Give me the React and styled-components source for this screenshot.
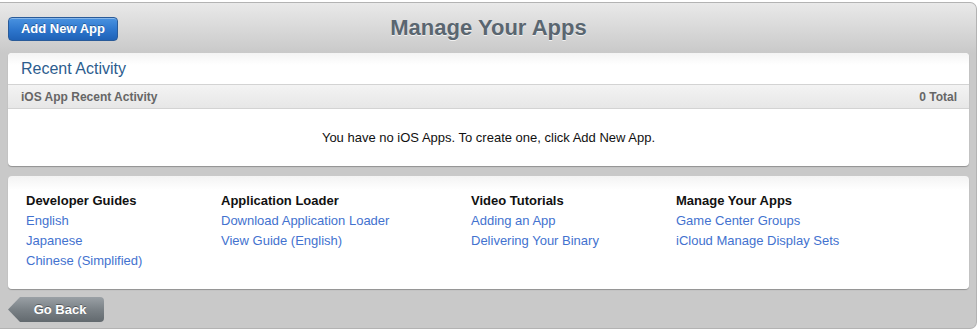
import React from 'react';
import styled, { createGlobalStyle } from 'styled-components';

const GlobalStyle = createGlobalStyle`
  body {
    margin: 0;
    background: #ffffff;
    font-family: 'Liberation Sans', Arial, sans-serif;
  }
`;

const Frame = styled.div`
  margin-top: 2px;
  width: 976px;
  height: 325px;
  border: 1px solid #b3b3b3;
  border-left: none;
  border-radius: 0 7px 7px 0;
  background: #c9c9c9;
  display: flex;
  flex-direction: column;
  overflow: hidden;
`;

const Header = styled.div`
  height: 50px;
  padding: 0 7px 0 8px;
  display: grid;
  grid-template-columns: 1fr auto 1fr;
  align-items: center;
  background: linear-gradient(#e9e9e9, #c9c9c9);
`;

const BlueButton = styled.button`
  justify-self: start;
  width: 110px;
  height: 24px;
  margin-top: 1px;
  border: 1px solid #2a5b99;
  border-radius: 4px;
  background: linear-gradient(#4a93e0, #2f78cf 50%, #1f62b7);
  color: #fff;
  font-family: inherit;
  font-weight: bold;
  font-size: 13px;
  text-shadow: 0 -1px 0 rgba(0, 0, 0, 0.3);
  box-shadow: inset 0 1px 0 rgba(255, 255, 255, 0.35);
  cursor: pointer;
`;

const PageTitle = styled.h1`
  margin: 0;
  font-size: 22px;
  font-weight: bold;
  color: #5a6670;
  text-shadow: 0 1px 0 rgba(255, 255, 255, 0.7);
`;

const Body = styled.div`
  padding: 0 7px 0 8px;
  display: flex;
  flex-direction: column;
  gap: 10px;
`;

const Panel = styled.div`
  background: #fff;
  border-radius: 4px;
  box-shadow: 0 1px 1px rgba(0, 0, 0, 0.28);
  overflow: hidden;
`;

const PanelTitle = styled.div`
  height: 31px;
  padding-left: 13px;
  display: flex;
  align-items: center;
  font-size: 16px;
  color: #2c5d8e;
  background: linear-gradient(#f4f4f4, #ffffff 12px);
`;

const SubBar = styled.div`
  height: 23px;
  padding: 0 12px 0 13px;
  display: flex;
  justify-content: space-between;
  align-items: center;
  border-top: 1px solid #d3d3d3;
  border-bottom: 1px solid #d3d3d3;
  background: linear-gradient(#f3f3f3, #e7e7e7);
  font-size: 12px;
  font-weight: bold;
  color: #666;
`;

const Empty = styled.div`
  height: 57px;
  display: flex;
  align-items: center;
  justify-content: center;
  font-size: 13px;
  color: #111;
`;

const Guides = styled(Panel)`
  height: 113px;
  box-sizing: border-box;
  padding: 15px 0 0 18px;
  display: grid;
  grid-template-columns: 195px 250px 205px 1fr;
  background: linear-gradient(#f3f3f3, #ffffff 14px);
`;

const Column = styled.div`
  display: flex;
  flex-direction: column;
  line-height: 20px;
  font-size: 13px;
`;

const ColumnTitle = styled.div`
  font-weight: bold;
  color: #111;
`;

const Link = styled.a`
  color: #4372cf;
  text-decoration: none;
  cursor: pointer;
`;

const Footer = styled.div`
  padding: 8px 7px 0 8px;
`;

const BackButton = styled.button`
  width: 96px;
  height: 25px;
  padding: 0 0 0 8px;
  border: none;
  background: linear-gradient(#9aa0a5, #7a8186 50%, #62696e);
  clip-path: polygon(12px 0, 100% 0, 100% 100%, 12px 100%, 0 50%);
  border-radius: 0 4px 4px 0;
  color: #fff;
  font-family: inherit;
  font-weight: bold;
  font-size: 13px;
  text-shadow: 0 -1px 0 rgba(0, 0, 0, 0.35);
  cursor: pointer;
`;

const guides = [
  { title: 'Developer Guides', links: ['English', 'Japanese', 'Chinese (Simplified)'] },
  { title: 'Application Loader', links: ['Download Application Loader', 'View Guide (English)'] },
  { title: 'Video Tutorials', links: ['Adding an App', 'Delivering Your Binary'] },
  { title: 'Manage Your Apps', links: ['Game Center Groups', 'iCloud Manage Display Sets'] },
];

const App = () => {
  return (
    <>
      <GlobalStyle />
      <Frame>
        <Header>
          <BlueButton>Add New App</BlueButton>
          <PageTitle>Manage Your Apps</PageTitle>
          <span />
        </Header>
        <Body>
          <Panel>
            <PanelTitle>Recent Activity</PanelTitle>
            <SubBar>
              <span>iOS App Recent Activity</span>
              <span>0 Total</span>
            </SubBar>
            <Empty>You have no iOS Apps. To create one, click Add New App.</Empty>
          </Panel>
          <Guides>
            {guides.map((g) => (
              <Column key={g.title}>
                <ColumnTitle>{g.title}</ColumnTitle>
                {g.links.map((l) => (
                  <Link key={l}>{l}</Link>
                ))}
              </Column>
            ))}
          </Guides>
        </Body>
        <Footer>
          <BackButton>Go Back</BackButton>
        </Footer>
      </Frame>
    </>
  );
};

export default App;
